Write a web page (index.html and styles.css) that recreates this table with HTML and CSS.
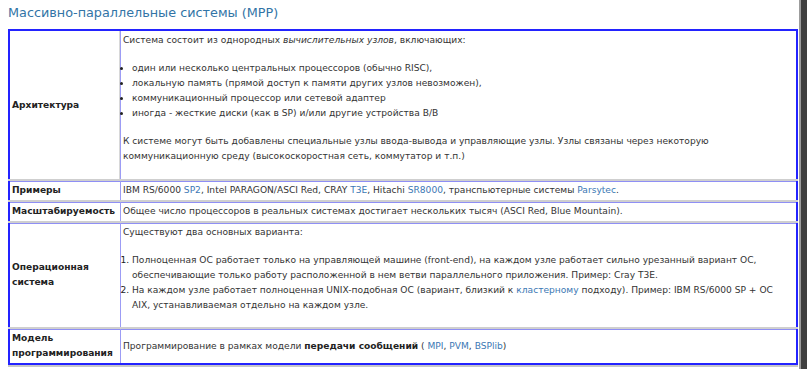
FILE: index.html
```html
<!DOCTYPE html>
<html lang="ru">
<head>
<meta charset="utf-8">
<title>MPP</title>
<link rel="stylesheet" href="styles.css">
</head>
<body>
<div class="page">
  <main class="content">
    <h2 class="title">Массивно-параллельные системы (MPP)</h2>
    <table class="grid">
      <tr>
        <td class="label">Архитектура</td>
        <td class="cell">
          <p>Система состоит из однородных <em>вычислительных узлов</em>, включающих:</p>
          <ul>
            <li>один или несколько центральных процессоров (обычно RISC),</li>
            <li>локальную память (прямой доступ к памяти других узлов невозможен),</li>
            <li>коммуникационный процессор или сетевой адаптер</li>
            <li>иногда - жесткие диски (как в SP) и/или другие устройства В/В</li>
          </ul>
          <p>К системе могут быть добавлены специальные узлы ввода-вывода и управляющие узлы. Узлы связаны через некоторую коммуникационную среду (высокоскоростная сеть, коммутатор и т.п.)</p>
        </td>
      </tr>
      <tr>
        <td class="label">Примеры</td>
        <td class="cell">IBM RS/6000 <a href="#">SP2</a>, Intel PARAGON/ASCI Red, CRAY <a href="#">T3E</a>, Hitachi <a href="#">SR8000</a>, транспьютерные системы <a href="#">Parsytec</a>.</td>
      </tr>
      <tr>
        <td class="label">Масштабируемость</td>
        <td class="cell">Общее число процессоров в реальных системах достигает нескольких тысяч (ASCI Red, Blue Mountain).</td>
      </tr>
      <tr>
        <td class="label">Операционная система</td>
        <td class="cell">
          <p>Существуют два основных варианта:</p>
          <ol>
            <li>Полноценная ОС работает только на управляющей машине (front-end), на каждом узле работает сильно урезанный вариант ОС, обеспечивающие только работу расположенной в нем ветви параллельного приложения. Пример: Cray T3E.</li>
            <li>На каждом узле работает полноценная UNIX-подобная ОС (вариант, близкий к <a href="#">кластерному</a> подходу). Пример: IBM RS/6000 SP + ОС AIX,&nbsp;устанавливаемая отдельно на каждом узле.</li>
          </ol>
        </td>
      </tr>
      <tr>
        <td class="label">Модель программирования</td>
        <td class="cell">Программирование в рамках модели <strong>передачи сообщений</strong> ( <a href="#">MPI</a>, <a href="#">PVM</a>, <a href="#">BSPlib</a>)</td>
      </tr>
    </table>
  </main>
  <div class="strip"></div>
</div>
</body>
</html>
```

FILE: styles.css
```css
html, body {
  margin: 0;
  padding: 0;
  background: #ffffff;
}

body {
  font-family: "DejaVu Sans", Verdana, sans-serif;
  font-size: 9.1px;
  color: #333333;
}

.page {
  display: flex;
  min-height: 369px;
}

.content {
  flex: 1;
  padding: 0 1px 0 8px;
}

.strip {
  width: 6px;
  background: #3f3f3f;
  border-left: 2px solid #9c9c9c;
}

.title {
  margin: 4px 0 8px 0;
  font-size: 12.8px;
  font-weight: normal;
  color: #3274a6;
  line-height: 17px;
}

.grid {
  width: 100%;
  border-collapse: collapse;
  border: 2px solid #2323ff;
  box-shadow: 0 2px 0 #c8c8c8;
}

.grid td {
  vertical-align: middle;
  line-height: 15px;
  padding: 2px;
}

.grid tr + tr td {
  border-top: 2px solid #cfcfcf;
  box-shadow: inset 0 1px 0 #8f8ff5;
}

.label {
  width: 106px;
  font-weight: bold;
  color: #222222;
  border-right: 1px solid #9c9cf5;
  box-shadow: inset -1px 0 0 #d8d8d8;
}

.grid tr + tr .label {
  box-shadow: inset 0 1px 0 #8f8ff5;
}

.cell p {
  margin: 0 0 13px 0;
}

.cell ul, .cell ol {
  margin: 0 0 13px 0;
  padding-left: 9px;
}

.cell ol {
  margin-bottom: 12px;
}

.cell li::marker {
  color: #222222;
}

.cell em {
  font-style: italic;
}

.cell strong {
  color: #222222;
}

.cell a {
  color: #3b78b4;
  text-decoration: none;
}
```
